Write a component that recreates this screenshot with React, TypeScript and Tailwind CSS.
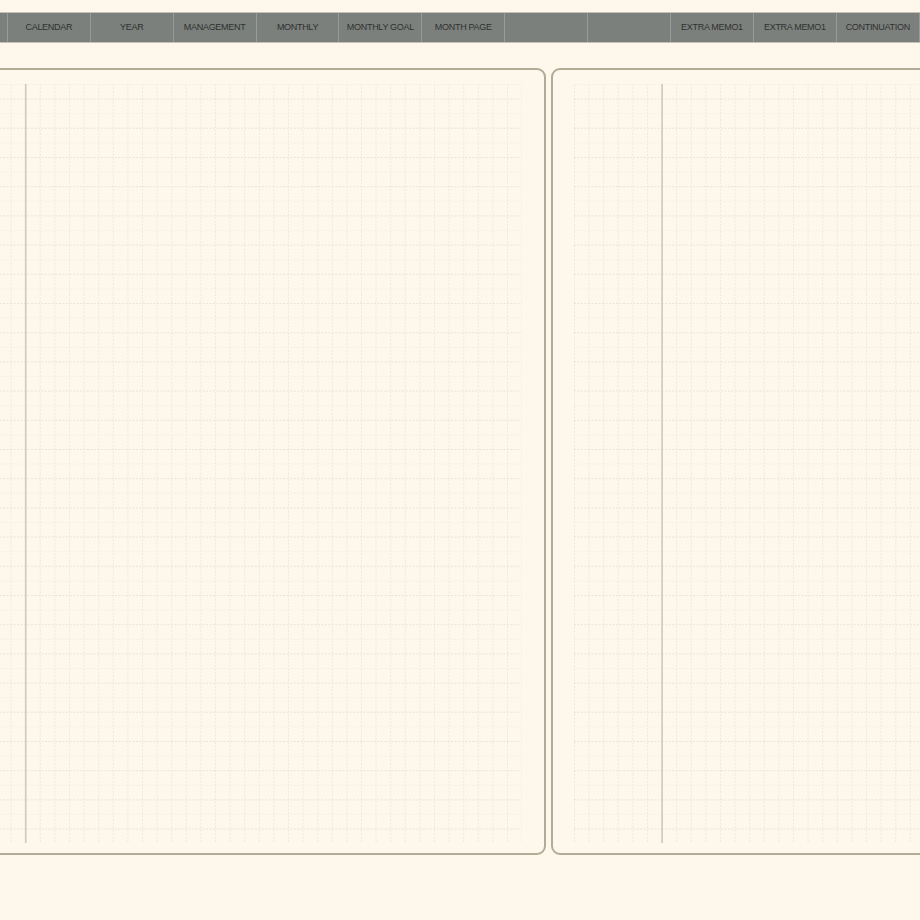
import React from 'react';

const CELL = 14.6;
const COLS = 36;
const ROWS = 52;

const tabs = [
  '',
  'CALENDAR',
  'YEAR',
  'MANAGEMENT',
  'MONTHLY',
  'MONTHLY GOAL',
  'MONTH PAGE',
  '',
  '',
  'EXTRA MEMO1',
  'EXTRA MEMO1',
  'CONTINUATION',
  '',
];

// grid paper with a vertical margin rule
function GridPaper({ marginCol }: { marginCol: number }) {
  const w = COLS * CELL;
  const h = ROWS * CELL;
  const xs = Array.from({ length: COLS + 1 }, (_, i) => i * CELL);
  const ys = Array.from({ length: ROWS + 1 }, (_, j) => j * CELL);
  return (
    <svg width={w} height={h} viewBox={`0 0 ${w} ${h}`} className="block shrink-0">
      {xs.map((x) => (
        <line key={'x' + x} x1={x + 0.5} y1={0} x2={x + 0.5} y2={h} stroke="#f1e8da" strokeWidth={1} strokeDasharray="2 1.5" />
      ))}
      {ys.map((y, j) => (
        <line
          key={'y' + y}
          x1={0}
          y1={y + 0.5}
          x2={w}
          y2={y + 0.5}
          stroke={j % 2 === 1 ? '#eee3d3' : '#f7efe3'}
          strokeWidth={1}
          strokeDasharray="2 1.5"
        />
      ))}
      <line x1={marginCol * CELL + 0.5} y1={0} x2={marginCol * CELL + 0.5} y2={h} stroke="#cdc8c0" strokeWidth={1.6} />
    </svg>
  );
}

function Page({ marginCol }: { marginCol: number }) {
  return (
    <div className="w-[573px] h-[787px] shrink-0 rounded-[9px] border-2 border-[#afad96] bg-[#fef7ec] pl-[21px] pt-[14px]">
      <GridPaper marginCol={marginCol} />
    </div>
  );
}

export default function App() {
  return (
    <div className="w-[920px] h-[920px] overflow-hidden bg-[#fef7eb]" style={{ fontFamily: '"Liberation Sans", Arial, sans-serif' }}>
      <div className="mt-[12px] h-[31px] flex border-y border-[#c4c2b4] bg-[#7c807d] ml-[-76px] w-max">
        {tabs.map((t, i) => (
          <div
            key={i}
            className="w-[82.9px] h-full shrink-0 flex items-center justify-center border-l border-[#979a96] text-[9px] tracking-[-0.3px] text-[#2f312f]"
          >
            {t}
          </div>
        ))}
      </div>
      <div className="mt-[25px] flex gap-[5px] ml-[-27px] w-max">
        <Page marginCol={2} />
        <Page marginCol={6} />
      </div>
    </div>
  );
}
